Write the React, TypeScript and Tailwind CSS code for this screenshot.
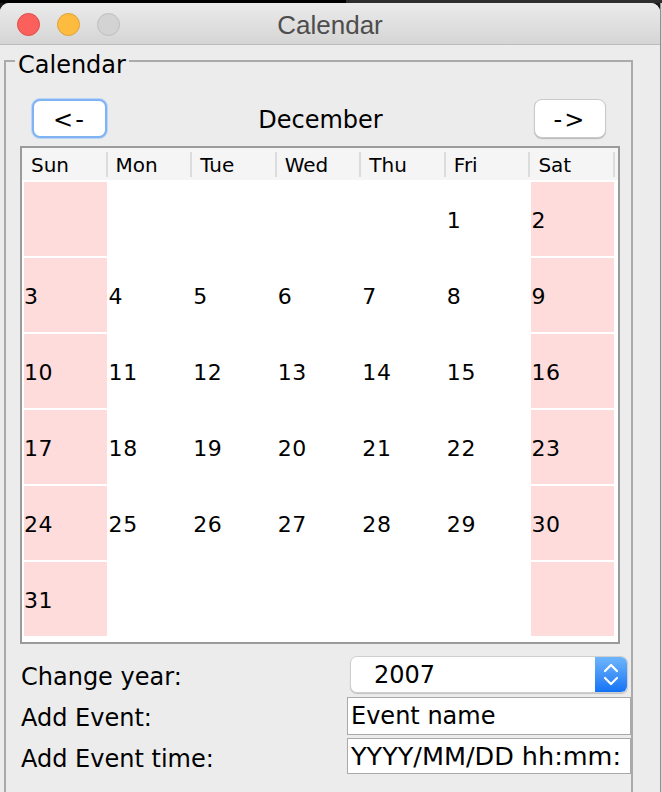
import React from "react";

const rows: (number | null)[][] = [
  [null, null, null, null, null, 1, 2],
  [3, 4, 5, 6, 7, 8, 9],
  [10, 11, 12, 13, 14, 15, 16],
  [17, 18, 19, 20, 21, 22, 23],
  [24, 25, 26, 27, 28, 29, 30],
  [31, null, null, null, null, null, null],
];

const days = ["Sun", "Mon", "Tue", "Wed", "Thu", "Fri", "Sat"];

export default function App() {
  return (
    <div className="w-[662px] h-[792px] overflow-hidden flex flex-col bg-[#1a1a1a] font-['DejaVu_Sans',sans-serif] text-black">
      {/* top strip */}
      <div className="h-[3px] flex shrink-0">
        <div className="w-[346px] bg-black" />
        <div className="flex-1 bg-[#2e2e2e]" />
      </div>
      <div className="flex flex-1 min-h-0">
        {/* window */}
        <div className="w-[660px] flex flex-col bg-[#ececec] rounded-t-[9px] overflow-hidden">
          {/* title bar */}
          <div className="h-[42px] shrink-0 grid grid-cols-[1fr_auto_1fr] items-center bg-gradient-to-b from-[#ebebeb] to-[#d5d5d5] border-b border-[#bcbcbc]">
            <div className="flex items-center gap-[17px] pl-[17px] pt-[1px]">
              <div className="w-[23px] h-[23px] rounded-full bg-[#fc605c] border border-[#de4b46]" />
              <div className="w-[23px] h-[23px] rounded-full bg-[#fdbc40] border border-[#dea035]" />
              <div className="w-[23px] h-[23px] rounded-full bg-[#d3d3d3] border border-[#bdbdbd]" />
            </div>
            <div className="font-['Liberation_Sans',sans-serif] text-[26px] leading-[30px] text-[#4d4d4d] pt-[2px]">
              Calendar
            </div>
            <div />
          </div>

          {/* body */}
          <div className="flex-1 min-h-0 pl-[4px] pt-[15px]">
            <div className="relative w-[629px] h-[760px] border-2 border-[#aaaaaa]">
              <span className="absolute left-[9px] top-[-9px] px-[3px] bg-[#ececec] text-[24px] leading-[24px]">
                Calendar
              </span>

              <div className="flex flex-col">
                {/* nav row */}
                <div className="mt-[37px] ml-[14px] w-[600px] h-[39px] pl-[12px] pr-[14px] flex items-center">
                  <button className="w-[75px] h-[39px] rounded-[8px] bg-white border-2 border-[#7fb3f1] shadow-[0_0_0_1px_#b9d5f7] text-[24px] leading-[24px] flex items-center justify-center pt-[2px] tracking-[2px]">
                    &lt;-
                  </button>
                  <div className="flex-1 text-center text-[24px] leading-[30px] pt-[3px]">December</div>
                  <button className="w-[72px] h-[39px] rounded-[8px] bg-white border border-[#c9c9c9] shadow-[0_1px_1px_rgba(0,0,0,0.22)] text-[24px] leading-[24px] flex items-center justify-center pt-[2px] tracking-[2px]">
                    -&gt;
                  </button>
                </div>

                {/* table */}
                <div className="mt-[8px] ml-[14px] w-[600px] h-[498px] border-2 border-[#9b9b9b] bg-white flex flex-col">
                  <div className="h-[32px] bg-[#f5f5f5] pl-[1px]">
                    <div className="w-[592px] h-full grid grid-cols-7">
                      {days.map((d) => (
                        <div key={d} className="flex items-center justify-between pl-[8px]">
                          <span className="text-[20px] leading-[24px] pt-[2px]">{d}</span>
                          <div className="w-[2px] h-[25px] bg-[#dcdcdc]" />
                        </div>
                      ))}
                    </div>
                  </div>
                  <div className="pl-[2px] pt-[2px]">
                    <div className="w-[590px] grid grid-cols-7 gap-x-[2px] gap-y-[2px] auto-rows-[74px]">
                      {rows.flatMap((r, ri) =>
                        r.map((n, ci) => (
                          <div
                            key={`${ri}-${ci}`}
                            className={`flex items-center pt-[3px] text-[22px] leading-[26px] tracking-[0.6px] ${
                              ci === 0 || ci === 6 ? "bg-[#fddcdb]" : "bg-white"
                            }`}
                          >
                            {n !== null ? n : ""}
                          </div>
                        ))
                      )}
                    </div>
                  </div>
                </div>

                {/* form */}
                <div className="mt-[12px] flex flex-col">
                  <div className="flex h-[37px]">
                    <div className="w-[341px] pl-[15px] pt-[3px] text-[24px] leading-[37px]">Change year:</div>
                    <div className="flex-1 px-[3px]">
                      <div className="h-[37px] flex rounded-[7px] bg-white border border-[#cfcfcf] shadow-[0_1px_1px_rgba(0,0,0,0.18)] overflow-hidden">
                        <div className="flex-1 pl-[23px] pt-[1px] text-[24px] leading-[35px]">2007</div>
                        <div className="w-[32px] h-full bg-gradient-to-b from-[#6db5fb] to-[#1172f5] flex items-center justify-center">
                          <svg width="32" height="37" viewBox="0 0 32 37" fill="none">
                            <path d="M10 15 L16 9 L22 15" stroke="white" strokeWidth="2.2" strokeLinecap="round" strokeLinejoin="round" />
                            <path d="M10 22 L16 28 L22 22" stroke="white" strokeWidth="2.2" strokeLinecap="round" strokeLinejoin="round" />
                          </svg>
                        </div>
                      </div>
                    </div>
                  </div>
                  <div className="flex h-[38px] mt-[4px]">
                    <div className="w-[341px] pl-[15px] pt-[2px] text-[24px] leading-[38px]">Add Event:</div>
                    <div className="flex-1 h-[38px] bg-white border border-[#a9a9a9] pl-[3px] text-[24px] leading-[36px] overflow-hidden whitespace-nowrap">
                      Event name
                    </div>
                  </div>
                  <div className="flex h-[36px] mt-[3px]">
                    <div className="w-[341px] pl-[15px] pt-[3px] text-[24px] leading-[36px]">Add Event time:</div>
                    <div className="flex-1 h-[36px] bg-white border border-[#a9a9a9] pl-[3px] text-[25.5px] leading-[34px] overflow-hidden whitespace-nowrap">
                      YYYY/MM/DD hh:mm:
                    </div>
                  </div>
                </div>
              </div>
            </div>
          </div>
        </div>
        {/* right strip */}
        <div className="flex-1 bg-[#d6d6d6] border-l border-[#8f8f8f]" />
      </div>
    </div>
  );
}
